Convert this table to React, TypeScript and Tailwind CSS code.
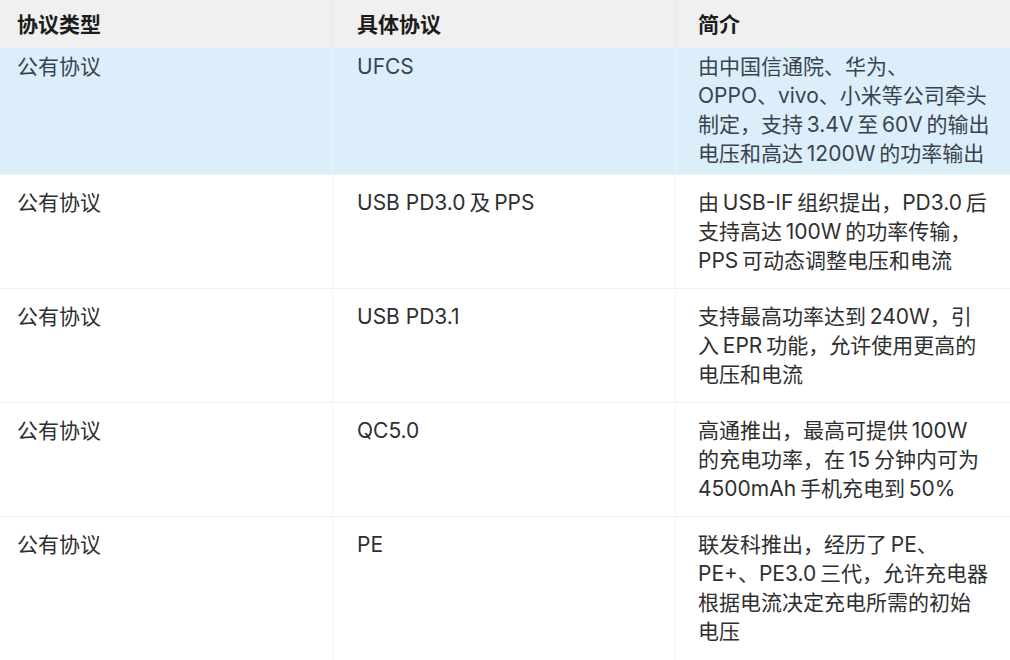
import React from "react";

const S = "\u2009";

const rows = [
  {
    type: "公有协议",
    name: "UFCS",
    lines: [
      "由中国信通院、华为、",
      "OPPO、vivo、小米等公司牵头",
      `制定，支持${S}3.4V${S}至${S}60V${S}的输出`,
      `电压和高达${S}1200W${S}的功率输出`,
    ],
  },
  {
    type: "公有协议",
    name: `USB PD3.0${S}及${S}PPS`,
    lines: [
      `由${S}USB-IF${S}组织提出，PD3.0${S}后`,
      `支持高达${S}100W${S}的功率传输，`,
      `PPS${S}可动态调整电压和电流`,
    ],
  },
  {
    type: "公有协议",
    name: "USB PD3.1",
    lines: [`支持最高功率达到${S}240W，引`, `入${S}EPR${S}功能，允许使用更高的`, "电压和电流"],
  },
  {
    type: "公有协议",
    name: "QC5.0",
    lines: [`高通推出，最高可提供${S}100W`, `的充电功率，在${S}15${S}分钟内可为`, `4500mAh${S}手机充电到${S}50%`],
  },
  {
    type: "公有协议",
    name: "PE",
    lines: [`联发科推出，经历了${S}PE、`, `PE+、PE3.0${S}三代，允许充电器`, "根据电流决定充电所需的初始", "电压"],
  },
];

export default function App() {
  return (
    <div className="h-[660px] w-[1010px] overflow-hidden bg-white font-['Inter','Noto_Sans_CJK_SC',sans-serif] text-[21px] leading-[29px] text-[#2f2f2f]">
      <div className="grid h-[48px] grid-cols-[333px_343px_1fr] bg-[#f0f0f0] font-semibold text-[#1c1c1c]">
        <div className="border-r border-[#e8e8e8] pl-[17px] pt-[10px]">协议类型</div>
        <div className="border-r border-[#e8e8e8] pl-[24px] pt-[10px]">具体协议</div>
        <div className="pl-[22px] pt-[10px]">简介</div>
      </div>
      {rows.map((row, i) => (
        <div
          key={i}
          className={
            i === 0
              ? "grid grid-cols-[333px_343px_1fr] border-b border-[#eef3f7] bg-[#ddeefb] text-[#38434d]"
              : "grid grid-cols-[333px_343px_1fr] border-b border-[#efefef]"
          }
        >
          <div className={`border-r border-[#f3f3f3] pl-[17px] ${i === 0 ? "pt-[4px]" : "pt-[13px]"}`}>
            {row.type}
          </div>
          <div className={`border-r border-[#f3f3f3] pl-[24px] ${i === 0 ? "pt-[4px]" : "pt-[13px]"}`}>
            {row.name}
          </div>
          <div className={`pl-[22px] ${i === 0 ? "pb-[6px] pt-[4px]" : i === 4 ? "pb-[15px] pt-[13px]" : "pb-[13px] pt-[13px]"}`}>
            {row.lines.map((line, j) => (
              <div key={j} className="whitespace-nowrap">
                {line}
              </div>
            ))}
          </div>
        </div>
      ))}
    </div>
  );
}
